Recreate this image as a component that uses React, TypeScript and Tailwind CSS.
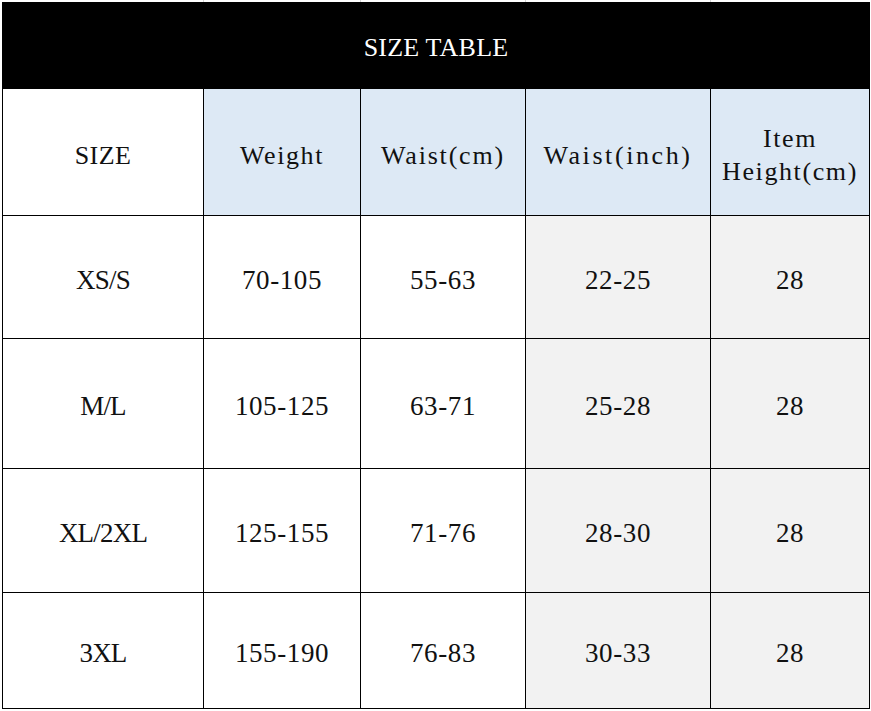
const cols = 'grid-cols-[201px_157px_165px_185px_159px]';

const rows = [
  { size: 'XS/S', weight: '70-105', cm: '55-63', inch: '22-25', height: '28', h: 'h-[123px]' },
  { size: 'M/L', weight: '105-125', cm: '63-71', inch: '25-28', height: '28', h: 'h-[130px]' },
  { size: 'XL/2XL', weight: '125-155', cm: '71-76', inch: '28-30', height: '28', h: 'h-[124px]' },
  { size: '3XL', weight: '155-190', cm: '76-83', inch: '30-33', height: '28', h: 'h-[116px]' },
];

function Cell({ children, className = '' }: { children: React.ReactNode; className?: string }) {
  return (
    <div className={`flex items-center justify-center text-center border-r border-b border-black ${className}`}>
      {children}
    </div>
  );
}

export default function App() {
  return (
    <div
      className="w-[871px] h-[711px] bg-white overflow-hidden text-[#111]"
      style={{ fontFamily: '"Liberation Serif", "Times New Roman", serif' }}
    >
      {/* faint spreadsheet gridlines above the table */}
      <div className={`grid ${cols} ml-[2px] h-[2px] border-l border-transparent`}>
        <div className="border-r border-[#d4d4d4]" />
        <div className="border-r border-[#d4d4d4]" />
        <div className="border-r border-[#d4d4d4]" />
        <div className="border-r border-[#d4d4d4]" />
        <div />
      </div>

      <div className={`grid ${cols} ml-[2px] w-[868px] border-l border-black`}>
        <div className="col-span-5 h-[87px] bg-black border-r border-b border-black flex items-center justify-center text-white text-[26px] tracking-[0.2px] pt-[4px]">
          SIZE TABLE
        </div>

        <Cell className="h-[127px] bg-white text-[26px] tracking-[0.4px] pt-[6px]">SIZE</Cell>
        <Cell className="h-[127px] bg-[#dde9f5] text-[26px] tracking-[1.6px] pt-[6px]">Weight</Cell>
        <Cell className="h-[127px] bg-[#dde9f5] text-[26px] tracking-[1.8px] pt-[6px]">Waist(cm)</Cell>
        <Cell className="h-[127px] bg-[#dde9f5] text-[26px] tracking-[2.6px] pt-[6px]">Waist(inch)</Cell>
        <Cell className="h-[127px] bg-[#dde9f5] text-[26px] tracking-[1.6px] leading-[33px] pt-[6px]">
          <span>
            Item
            <br />
            Height(cm)
          </span>
        </Cell>

        {rows.map((r) => (
          <div key={r.size} className="contents">
            <Cell className={`${r.h} bg-white text-[27px] tracking-[-0.8px] pt-[6px]`}>{r.size}</Cell>
            <Cell className={`${r.h} bg-white text-[27px] tracking-[0.6px] pt-[6px]`}>{r.weight}</Cell>
            <Cell className={`${r.h} bg-white text-[27px] tracking-[0.6px] pt-[6px]`}>{r.cm}</Cell>
            <Cell className={`${r.h} bg-[#f2f2f2] text-[27px] tracking-[0.6px] pt-[6px]`}>{r.inch}</Cell>
            <Cell className={`${r.h} bg-[#f2f2f2] text-[27px] tracking-[0.6px] pt-[6px]`}>{r.height}</Cell>
          </div>
        ))}
      </div>
    </div>
  );
}
